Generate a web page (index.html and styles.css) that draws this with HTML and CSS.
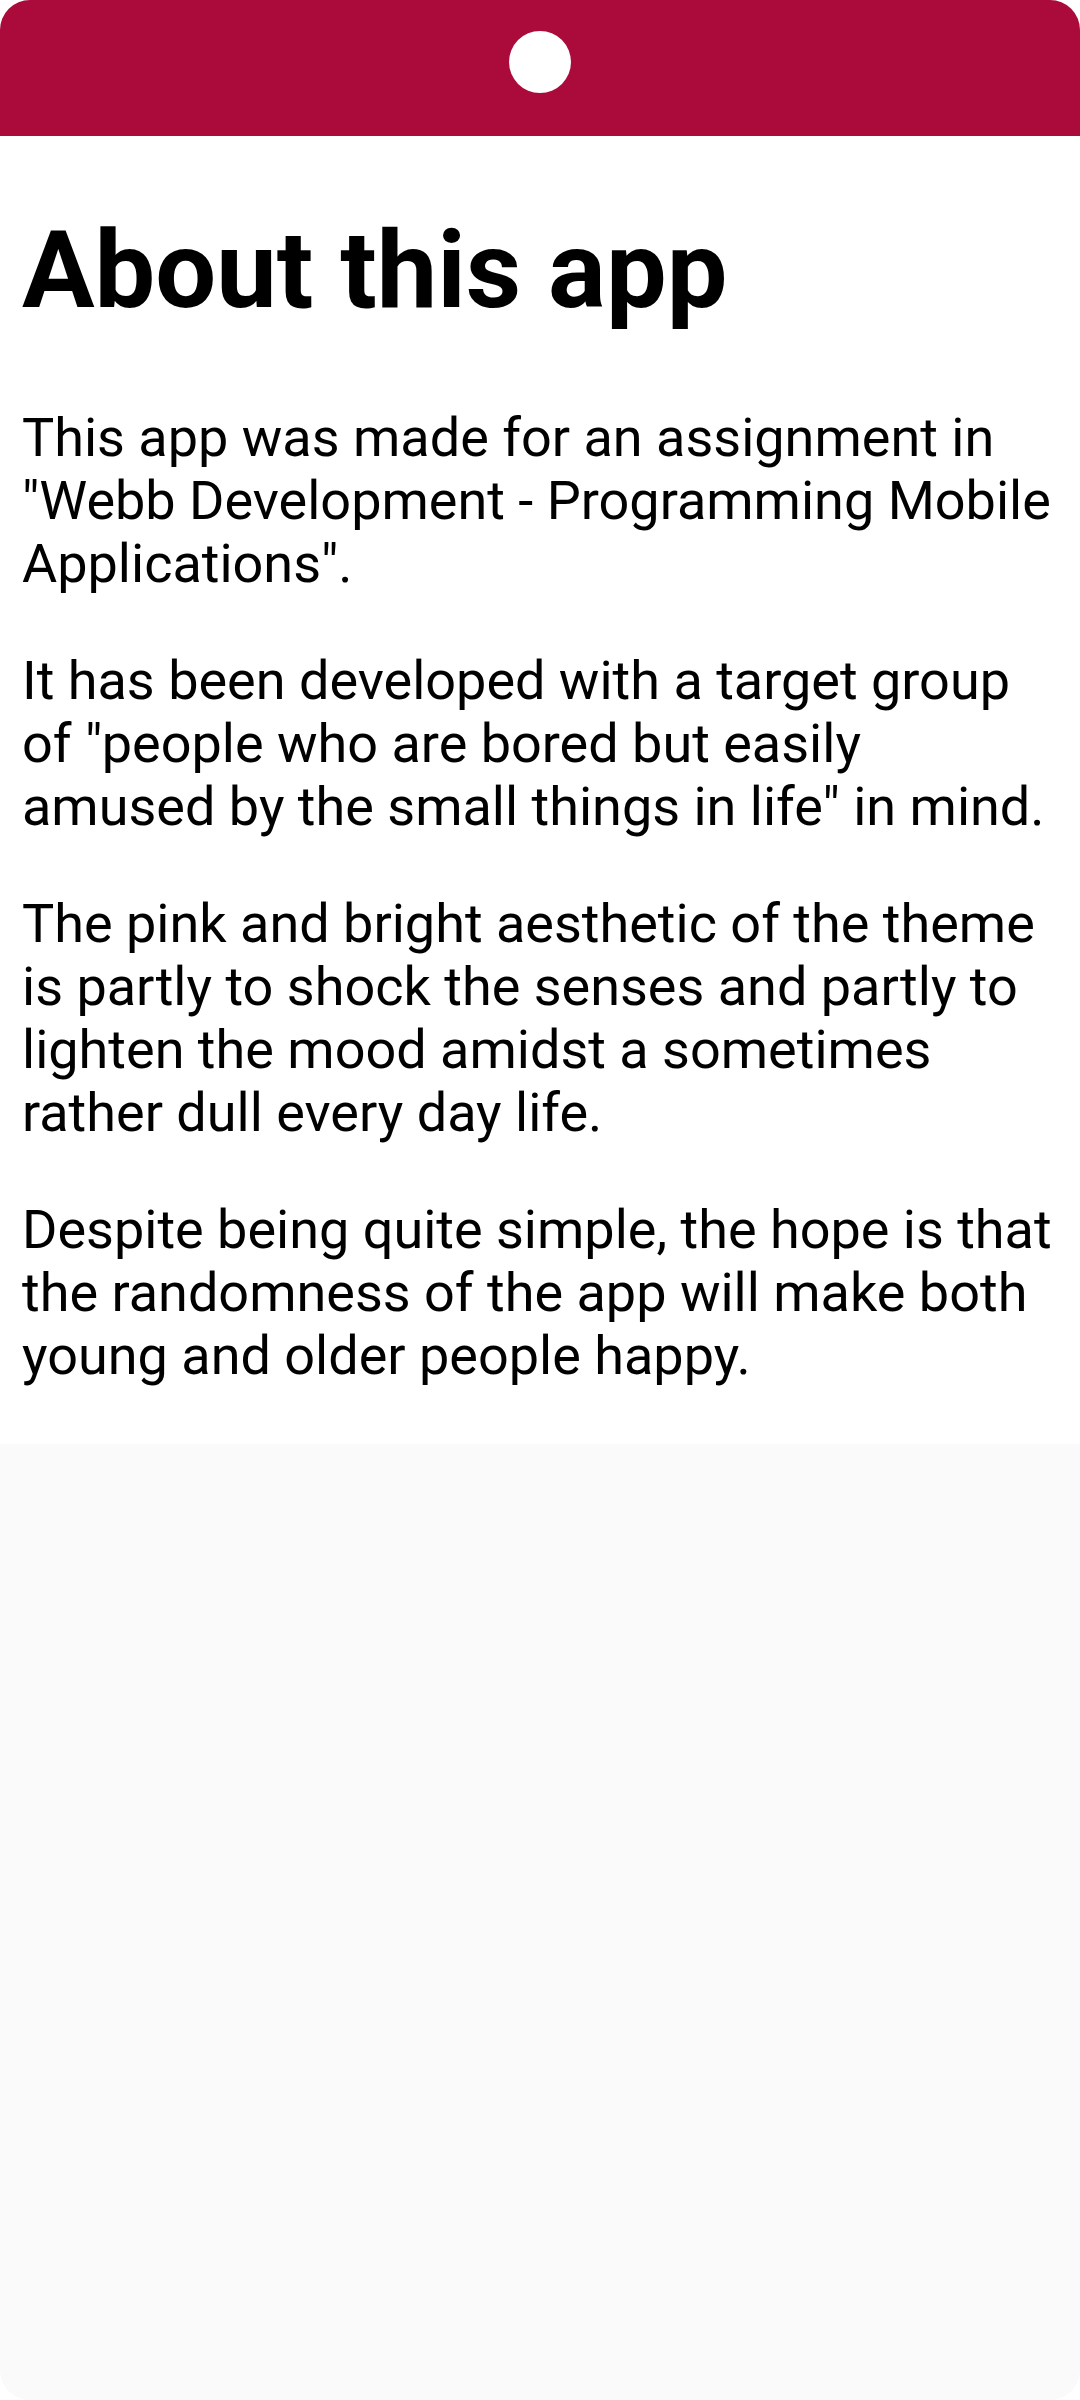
FILE: index.html
```html
<!DOCTYPE html>
<html lang="en">
<head>
<meta charset="utf-8">
<title>About this app</title>
<link rel="stylesheet" href="styles.css">
</head>
<body>
<div class="screen">
  <header class="topbar">
    <div class="camera"></div>
  </header>
  <main class="content">
    <h1 class="title">About this app</h1>
    <p class="para">This app was made for an assignment in "Webb Development - Programming Mobile Applications".</p>
    <p class="para">It has been developed with a target group of "people who are bored but easily amused by the small things in life" in mind.</p>
    <p class="para">The pink and bright aesthetic of the theme is partly to shock the senses and partly to lighten the mood amidst a sometimes rather dull every day life.</p>
    <p class="para">Despite being quite simple, the hope is that the randomness of the app will make both young and older people happy.</p>
  </main>
</div>
</body>
</html>
```
FILE: styles.css
```css
html, body {
  margin: 0;
  padding: 0;
  background: #ffffff;
}

.screen {
  width: 1080px;
  height: 2400px;
  border-radius: 30px;
  overflow: hidden;
  background: #fafafa;
  display: flex;
  flex-direction: column;
  font-family: Roboto, "Noto Sans", sans-serif;
  color: #000000;
}

.topbar {
  height: 136px;
  flex: 0 0 136px;
  background: #ab0b3b;
  display: flex;
  justify-content: center;
  align-items: flex-start;
  padding-top: 31px;
  box-sizing: border-box;
}

.camera {
  width: 62px;
  height: 62px;
  border-radius: 50%;
  background: #ffffff;
}

.content {
  background: #ffffff;
  padding: 0 22px 3px 22px;
}

.title {
  font-size: 108px;
  font-weight: 700;
  line-height: normal;
  margin: 71px 0 73px 0;
  letter-spacing: 0;
}

.para {
  font-size: 54px;
  font-weight: 400;
  line-height: 63px;
  margin: 0 0 54px 0;
}
```
